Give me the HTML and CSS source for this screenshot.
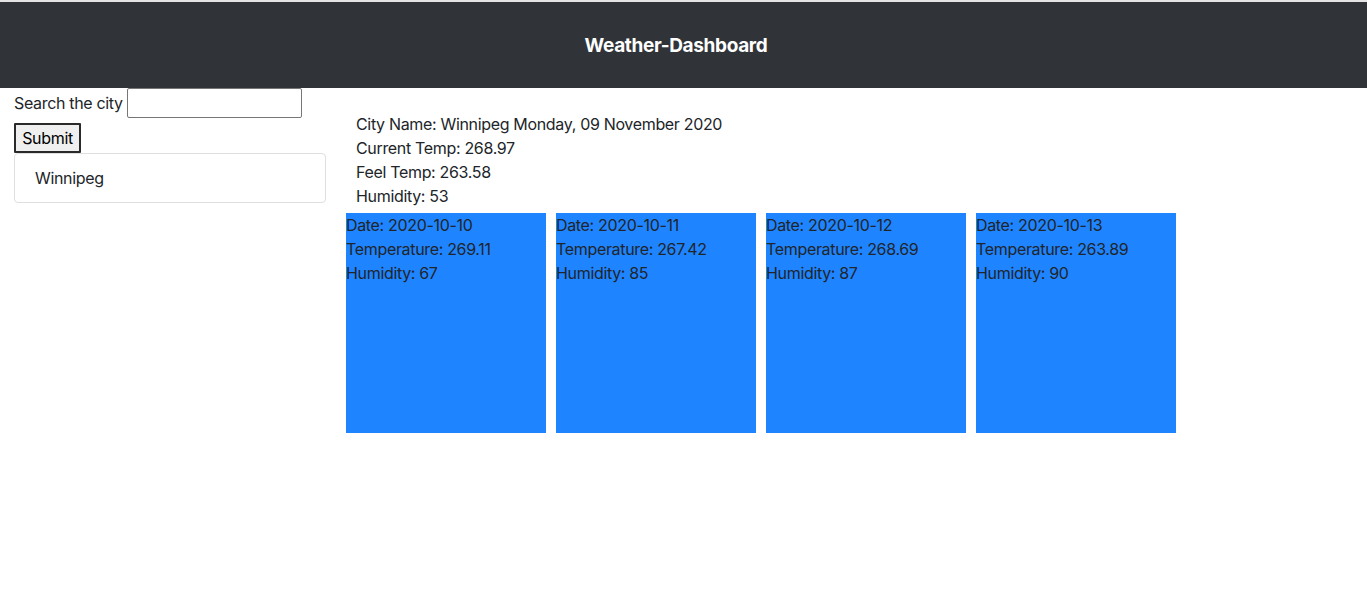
FILE: index.html
```html
<!DOCTYPE html>
<html>
<head>
<meta charset="utf-8">
<link rel="stylesheet" href="styles.css">
</head>
<body>
<header class="topbar"><h1 class="title">Weather-Dashboard</h1></header>
<main class="layout">
  <aside class="sidebar">
    <div class="search-row">
      <label class="search-label" for="city">Search the city</label>
      <input class="search-input" id="city" type="text">
    </div>
    <button class="submit-btn">Submit</button>
    <ul class="history">
      <li class="history-item">Winnipeg</li>
    </ul>
  </aside>
  <section class="content">
    <div class="current">
      <div>City Name: Winnipeg Monday, 09 November 2020</div>
      <div>Current Temp: 268.97</div>
      <div>Feel Temp: 263.58</div>
      <div>Humidity: 53</div>
    </div>
    <div class="forecast">
      <div class="card"><div>Date: 2020-10-10</div><div>Temperature: 269.11</div><div>Humidity: 67</div></div>
      <div class="card"><div>Date: 2020-10-11</div><div>Temperature: 267.42</div><div>Humidity: 85</div></div>
      <div class="card"><div>Date: 2020-10-12</div><div>Temperature: 268.69</div><div>Humidity: 87</div></div>
      <div class="card"><div>Date: 2020-10-13</div><div>Temperature: 263.89</div><div>Humidity: 90</div></div>
    </div>
  </section>
</main>
</body>
</html>
```
FILE: styles.css
```css
html, body {
  margin: 0;
  padding: 0;
  background: #fff;
}
body {
  font-family: Inter, "Noto Sans", "Liberation Sans", sans-serif;
  font-size: 16px;
  line-height: 24px;
  letter-spacing: -0.33px;
  color: #212529;
  border-top: 2px solid #e4e4e4;
}
.topbar {
  background: #303438;
  height: 86px;
  padding-right: 15px;
  padding-top: 2px;
  box-sizing: border-box;
  display: flex;
  align-items: center;
  justify-content: center;
}
.title {
  margin: 0;
  color: #fff;
  font-size: 19px;
  font-weight: 700;
  line-height: 24px;
  letter-spacing: -0.35px;
}
.layout {
  display: grid;
  grid-template-columns: 346px 1fr;
}
.sidebar {
  padding-left: 14px;
  width: 312px;
}
.search-row {
  display: flex;
  align-items: center;
  height: 30px;
}
.search-label {
  margin-right: 4px;
}
.search-input {
  width: 175px;
  height: 30px;
  box-sizing: border-box;
  border: 1px solid #767676;
  border-radius: 2px;
  padding: 0 4px;
  font: inherit;
}
.submit-btn {
  margin-top: 5px;
  display: block;
  width: 67px;
  height: 30px;
  box-sizing: border-box;
  padding: 0;
  font-family: Inter, "Liberation Sans", Arial, sans-serif;
  font-size: 16px;
  letter-spacing: -0.33px;
  background: #efefef;
  border: 2px solid #2a2a2a;
  border-radius: 1px;
  color: #000;
}
.history {
  list-style: none;
  margin: 0;
  padding: 0;
}
.history-item {
  border: 1px solid #dfdfdf;
  border-radius: 4px;
  padding: 12px 20px;
}
.content {
  padding-top: 24px;
}
.current {
  padding-left: 10px;
  margin-bottom: 5px;
}
.forecast {
  display: flex;
  gap: 10px;
}
.card {
  width: 200px;
  height: 220px;
  background: #1e84ff;
}
```
